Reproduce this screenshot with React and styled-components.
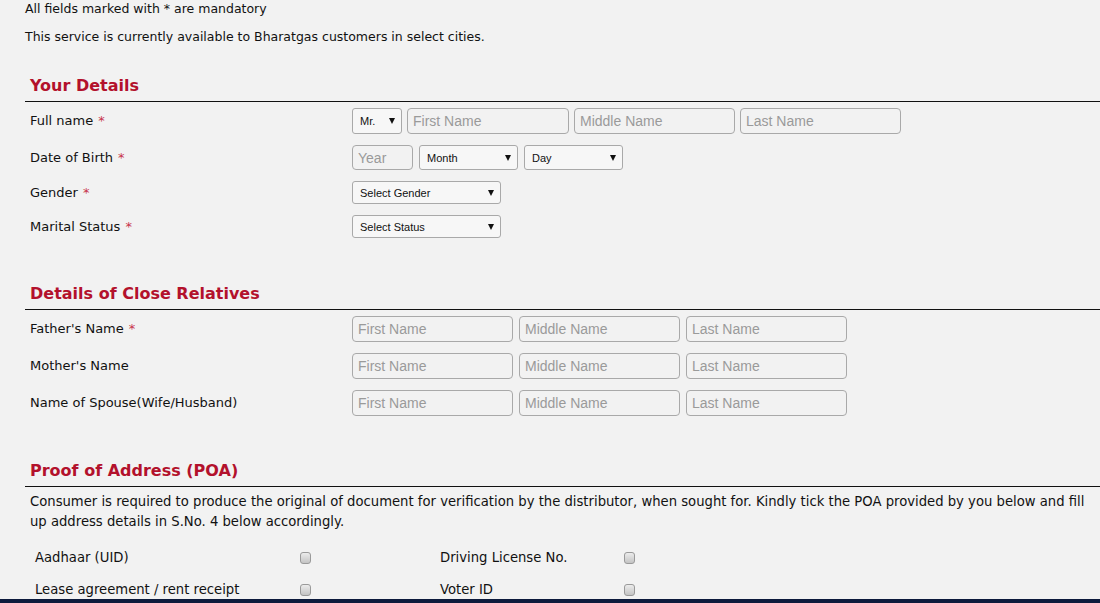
import React from "react";
import styled, { createGlobalStyle } from "styled-components";

const GlobalStyle = createGlobalStyle`
  html, body {
    margin: 0;
    padding: 0;
    background: #f2f2f2;
  }
  body {
    font-family: Verdana, "DejaVu Sans", sans-serif;
    color: #111;
    overflow: hidden;
  }
`;

const Page = styled.div`
  width: 1100px;
  height: 603px;
  display: flex;
  flex-direction: column;
  overflow: hidden;
`;

const Content = styled.div`
  flex: 1;
  padding-left: 25px;
`;

const Note = styled.p`
  margin: ${(p) => p.$top || 0}px 0 0;
  font-size: 12.5px;
  line-height: 18px;
`;

const Heading = styled.h2`
  margin: ${(p) => p.$top}px 0 0;
  padding: 0 0 4px 5px;
  border-bottom: 1px solid #111;
  font-family: Tahoma, "DejaVu Sans", sans-serif;
  font-size: 16px;
  line-height: 22px;
  font-weight: bold;
  color: #b3112c;
`;

const Rows = styled.div`
  display: flex;
  flex-direction: column;
  gap: 11px;
  margin-top: 6px;
  padding-left: 5px;
`;

const Row = styled.div`
  display: grid;
  grid-template-columns: 322px 1fr;
  align-items: center;
`;

const Label = styled.span`
  font-size: 13px;
  line-height: 18px;
`;

const Star = styled.span`
  color: #c8344c;
  margin-left: 5px;
`;

const Fields = styled.div`
  display: flex;
  align-items: center;
  gap: ${(p) => p.$gap || 6}px;
`;

const TextInput = styled.input`
  box-sizing: border-box;
  width: ${(p) => p.$w}px;
  height: ${(p) => p.$h || 26}px;
  margin: 0;
  padding: 0 5px;
  border: 1px solid #a9a9a9;
  border-radius: 4px;
  background: #f2f2f2;
  font-family: Arial, "Liberation Sans", sans-serif;
  font-size: 14px;
  outline: none;
  &::placeholder {
    color: #9a9a9a;
  }
`;

const SelectBox = styled.div`
  position: relative;
  width: ${(p) => p.$w}px;
  height: ${(p) => p.$h || 25}px;
`;

const NativeSelect = styled.select`
  appearance: none;
  -webkit-appearance: none;
  box-sizing: border-box;
  width: 100%;
  height: 100%;
  margin: 0;
  padding: 0 0 0 7px;
  border: 1px solid #a9a9a9;
  border-radius: 3px;
  background: #f7f7f7;
  color: #111;
  font-family: Arial, "Liberation Sans", sans-serif;
  font-size: 11px;
  outline: none;
`;

const Arrow = styled.span`
  position: absolute;
  right: 7px;
  top: 50%;
  transform: translateY(-50%);
  width: 0;
  height: 0;
  border-left: 3.5px solid transparent;
  border-right: 3.5px solid transparent;
  border-top: 6px solid #111;
  pointer-events: none;
`;

function Select({ w, h, value }) {
  return (
    <SelectBox $w={w} $h={h}>
      <NativeSelect defaultValue={value}>
        <option>{value}</option>
      </NativeSelect>
      <Arrow />
    </SelectBox>
  );
}

const Paragraph = styled.p`
  margin: 5px 0 0;
  padding-left: 5px;
  width: 1064px;
  font-size: 13.2px;
  line-height: 20px;
`;

const CheckGrid = styled.div`
  display: grid;
  grid-template-columns: 265px 140px 184px 20px;
  row-gap: 14px;
  margin-top: 17px;
  padding-left: 10px;
  align-items: center;
`;

const CheckLabel = styled.span`
  font-size: 13.2px;
  line-height: 18px;
`;

const Check = styled.input.attrs({ type: "checkbox" })`
  appearance: none;
  -webkit-appearance: none;
  width: 11px;
  height: 12px;
  margin: 0;
  border: 1px solid #9a9a9a;
  border-radius: 3px;
  background: linear-gradient(#ececec, #c4c4c4);
`;

const FooterBar = styled.div`
  height: 5px;
  background: #0c1a3c;
`;

const names = [
  { label: "Father's Name", req: true },
  { label: "Mother's Name" },
  { label: "Name of Spouse(Wife/Husband)" },
];

function NameFields({ first }) {
  return (
    <>
      <TextInput $w={first} placeholder="First Name" />
      <TextInput $w={161} placeholder="Middle Name" />
      <TextInput $w={161} placeholder="Last Name" />
    </>
  );
}

export default function App() {
  return (
    <Page>
      <GlobalStyle />
      <Content>
        <Note>All fields marked with * are mandatory</Note>
        <Note $top={10}>
          This service is currently available to Bharatgas customers in select cities.
        </Note>

        <Heading $top={29}>Your Details</Heading>
        <Rows>
          <Row>
            <Label>
              Full name<Star>*</Star>
            </Label>
            <Fields $gap={5}>
              <Select w={50} h={26} value="Mr." />
              <NameFields first={162} />
            </Fields>
          </Row>
          <Row>
            <Label>
              Date of Birth<Star>*</Star>
            </Label>
            <Fields>
              <TextInput $w={61} $h={25} placeholder="Year" />
              <Select w={99} value="Month" />
              <Select w={99} value="Day" />
            </Fields>
          </Row>
          <Row>
            <Label>
              Gender<Star>*</Star>
            </Label>
            <Fields>
              <Select w={149} h={23} value="Select Gender" />
            </Fields>
          </Row>
          <Row>
            <Label>
              Marital Status<Star>*</Star>
            </Label>
            <Fields>
              <Select w={149} h={23} value="Select Status" />
            </Fields>
          </Row>
        </Rows>

        <Heading $top={45}>Details of Close Relatives</Heading>
        <Rows>
          {names.map((n) => (
            <Row key={n.label}>
              <Label>
                {n.label}
                {n.req && <Star>*</Star>}
              </Label>
              <Fields>
                <NameFields first={161} />
              </Fields>
            </Row>
          ))}
        </Rows>

        <Heading $top={44}>Proof of Address (POA)</Heading>
        <Paragraph>
          Consumer is required to produce the original of document for verification by the
          distributor, when sought for. Kindly tick the POA provided by you below and fill up
          address details in S.No. 4 below accordingly.
        </Paragraph>
        <CheckGrid>
          <CheckLabel>Aadhaar (UID)</CheckLabel>
          <Check />
          <CheckLabel>Driving License No.</CheckLabel>
          <Check />
          <CheckLabel>Lease agreement / rent receipt</CheckLabel>
          <Check />
          <CheckLabel>Voter ID</CheckLabel>
          <Check />
        </CheckGrid>
      </Content>
      <FooterBar />
    </Page>
  );
}
